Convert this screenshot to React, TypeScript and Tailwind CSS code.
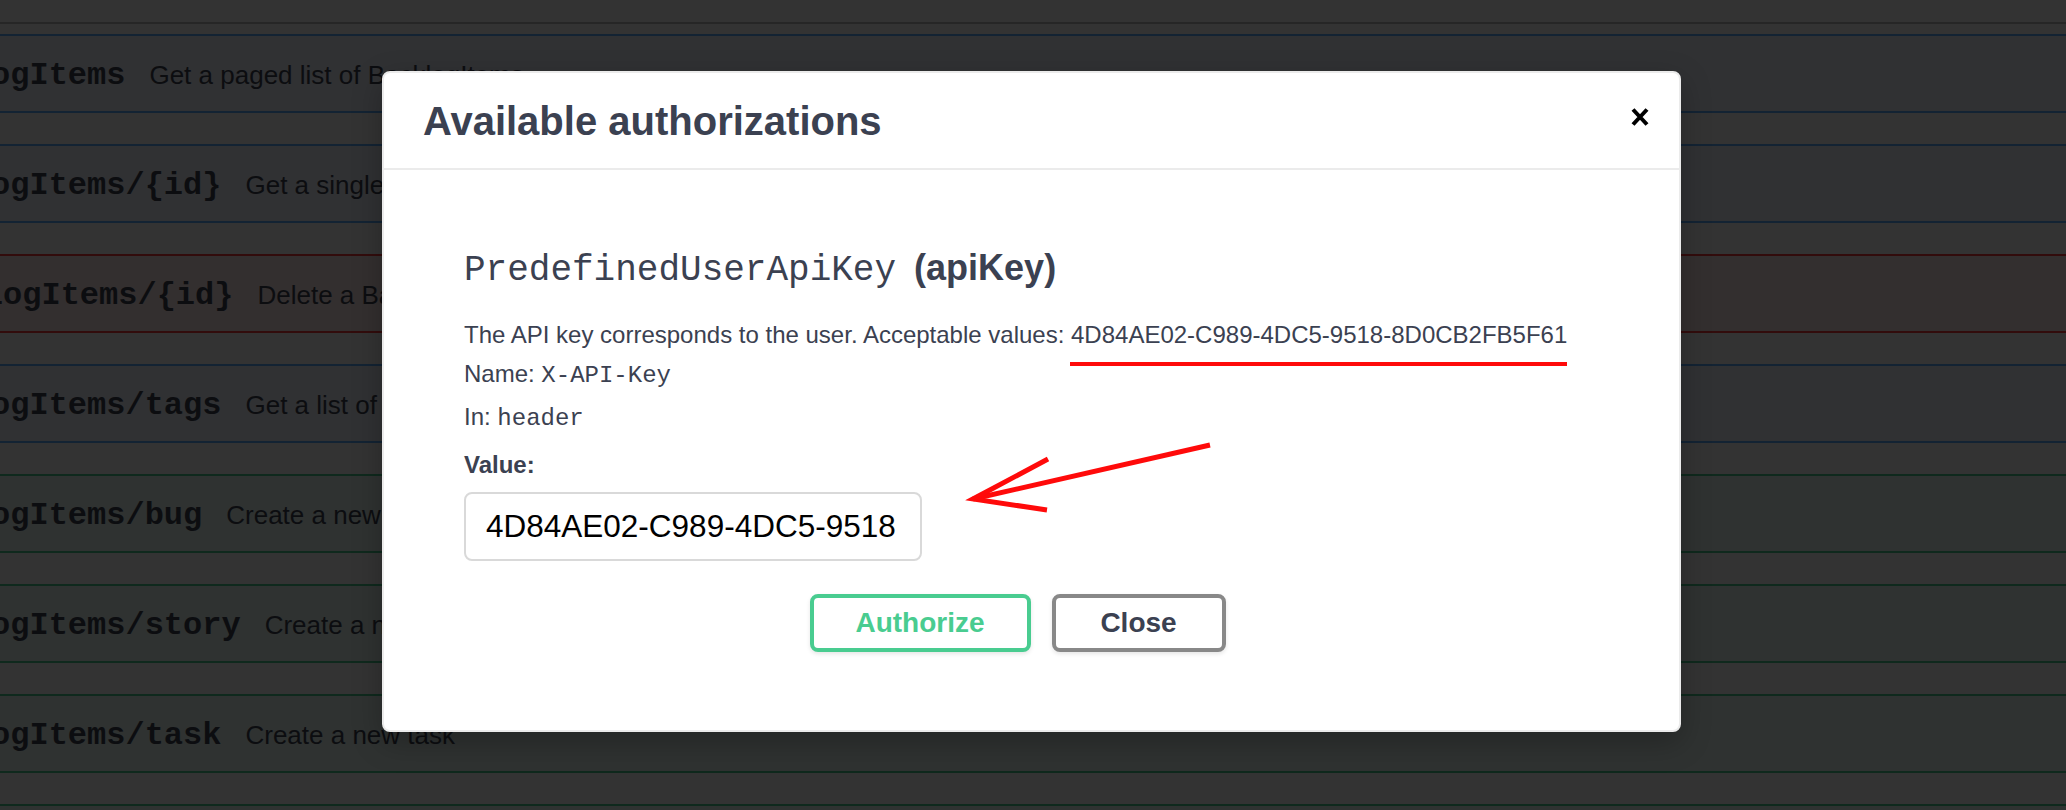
import React from "react";

type Method = "get" | "post" | "delete";

interface Operation {
  method: Method;
  path: string;
  summary: string;
}

const operations: Operation[] = [
  { method: "get", path: "BacklogItems", summary: "Get a paged list of BacklogItems" },
  { method: "get", path: "BacklogItems/{id}", summary: "Get a single BacklogItem" },
  { method: "delete", path: "BacklogItems/{id}", summary: "Delete a BacklogItem" },
  { method: "get", path: "BacklogItems/tags", summary: "Get a list of tags" },
  { method: "post", path: "BacklogItems/bug", summary: "Create a new bug" },
  { method: "post", path: "BacklogItems/story", summary: "Create a new story" },
  { method: "post", path: "BacklogItems/task", summary: "Create a new task" },
  { method: "post", path: "BacklogItems/epic", summary: "Create a new epic" },
];

// colours as they look under the 80% black backdrop
const methodStyles: Record<Method, string> = {
  get: "bg-[#303133] border-[#132333]",
  post: "bg-[#2f3231] border-[#0f291d]",
  delete: "bg-[#332f2f] border-[#320c0c]",
};

const pathOffset: Record<Method, string> = {
  get: "ml-[-105px]",
  post: "ml-[-105px]",
  delete: "ml-[-93px]",
};

function OperationRow({ op }: { op: Operation }) {
  return (
    <div
      className={`flex items-center h-[79px] pt-[4px] border-y-2 mt-[31px] first:mt-0 whitespace-nowrap ${methodStyles[op.method]}`}
    >
      <span
        className={`font-['Liberation_Mono',monospace] font-bold text-[32px] text-[#0c0d10] ${pathOffset[op.method]}`}
      >
        {op.path}
      </span>
      <span className="pl-6 text-[26px] text-[#0c0d10]">{op.summary}</span>
    </div>
  );
}

function CloseIcon() {
  return (
    <svg width="18" height="20" viewBox="0 0 18 20" className="mt-[-7px]">
      <path d="M2 2.5 L16 17.5 M16 2.5 L2 17.5" stroke="#000" strokeWidth="4" fill="none" />
    </svg>
  );
}

function Annotations() {
  // red marks drawn on top of the screenshot, modal-relative coordinates
  return (
    <svg className="absolute inset-0 pointer-events-none" width="1299" height="661" viewBox="0 0 1299 661">
      <path d="M686 291 L1183 291" stroke="#ff0a0a" strokeWidth="4" fill="none" />
      <path d="M826 372 L589 426" stroke="#ff0a0a" strokeWidth="5" fill="none" />
      <path d="M664 386 L589 426 L663 437" stroke="#ff0a0a" strokeWidth="5" fill="none" strokeLinejoin="miter" />
    </svg>
  );
}

export default function App() {
  return (
    <div className="relative w-full h-[810px] overflow-hidden bg-[#333333] font-['Liberation_Sans',Arial,sans-serif]">
      {/* Operations list behind the backdrop */}
      <div className="h-[24px] border-b-2 border-[#262626]" />
      <div className="flex flex-col pt-[10px]">
        {operations.map((op, i) => (
          <OperationRow key={i} op={op} />
        ))}
      </div>

      {/* Auth modal */}
      <div className="absolute left-[382px] top-[71px] w-[1299px] h-[661px] bg-white border-2 border-[#ebebeb] rounded-lg shadow-[0_10px_30px_rgba(0,0,0,0.25)] text-[#3b4151]">
        <div className="flex items-center justify-between h-[97px] pl-[39px] pr-[30px] border-b-2 border-[#ebebeb]">
          <h3 className="text-[40px] font-bold leading-none">Available authorizations</h3>
          <CloseIcon />
        </div>

        <div className="pt-[76px] pl-[80px] pr-[80px]">
          <h4 className="leading-[44px] text-[36px] whitespace-nowrap">
            <span className="font-['Liberation_Mono',monospace]">PredefinedUserApiKey</span>{" "}
            <span className="ml-[8px] font-bold">(apiKey)</span>
          </h4>

          <div className="mt-[21px] text-[24px] leading-[41px]">
            <p className="whitespace-nowrap">
              The API key corresponds to the user. Acceptable values: 4D84AE02-C989-4DC5-9518-8D0CB2FB5F61
            </p>
            <p className="mt-[-2px]">
              Name: <span className="font-['Liberation_Mono',monospace]">X-API-Key</span>
            </p>
            <p>
              In: <span className="font-['Liberation_Mono',monospace]">header</span>
            </p>
            <label className="block mt-[5px] font-bold">Value:</label>
          </div>

          <input
            type="text"
            readOnly
            value="4D84AE02-C989-4DC5-9518-8D0CB2FB5F61"
            className="mt-[7px] block w-[458px] h-[69px] border-2 border-[#d9d9d9] rounded-lg pl-[20px] pr-[24px] text-[31.5px] text-black outline-none"
          />

          <div className="flex justify-center mt-[33px]">
            <button className="w-[221px] h-[58px] border-4 border-[#49cc90] rounded-lg bg-white text-[#49cc90] text-[28px] font-bold shadow-[0_2px_4px_rgba(0,0,0,0.1)]">
              Authorize
            </button>
            <button className="ml-[21px] mr-[28px] w-[174px] h-[58px] border-4 border-[#888888] rounded-lg bg-white text-[#3b4151] text-[28px] font-bold shadow-[0_2px_4px_rgba(0,0,0,0.1)]">
              Close
            </button>
          </div>
        </div>

        <Annotations />
      </div>
    </div>
  );
}
